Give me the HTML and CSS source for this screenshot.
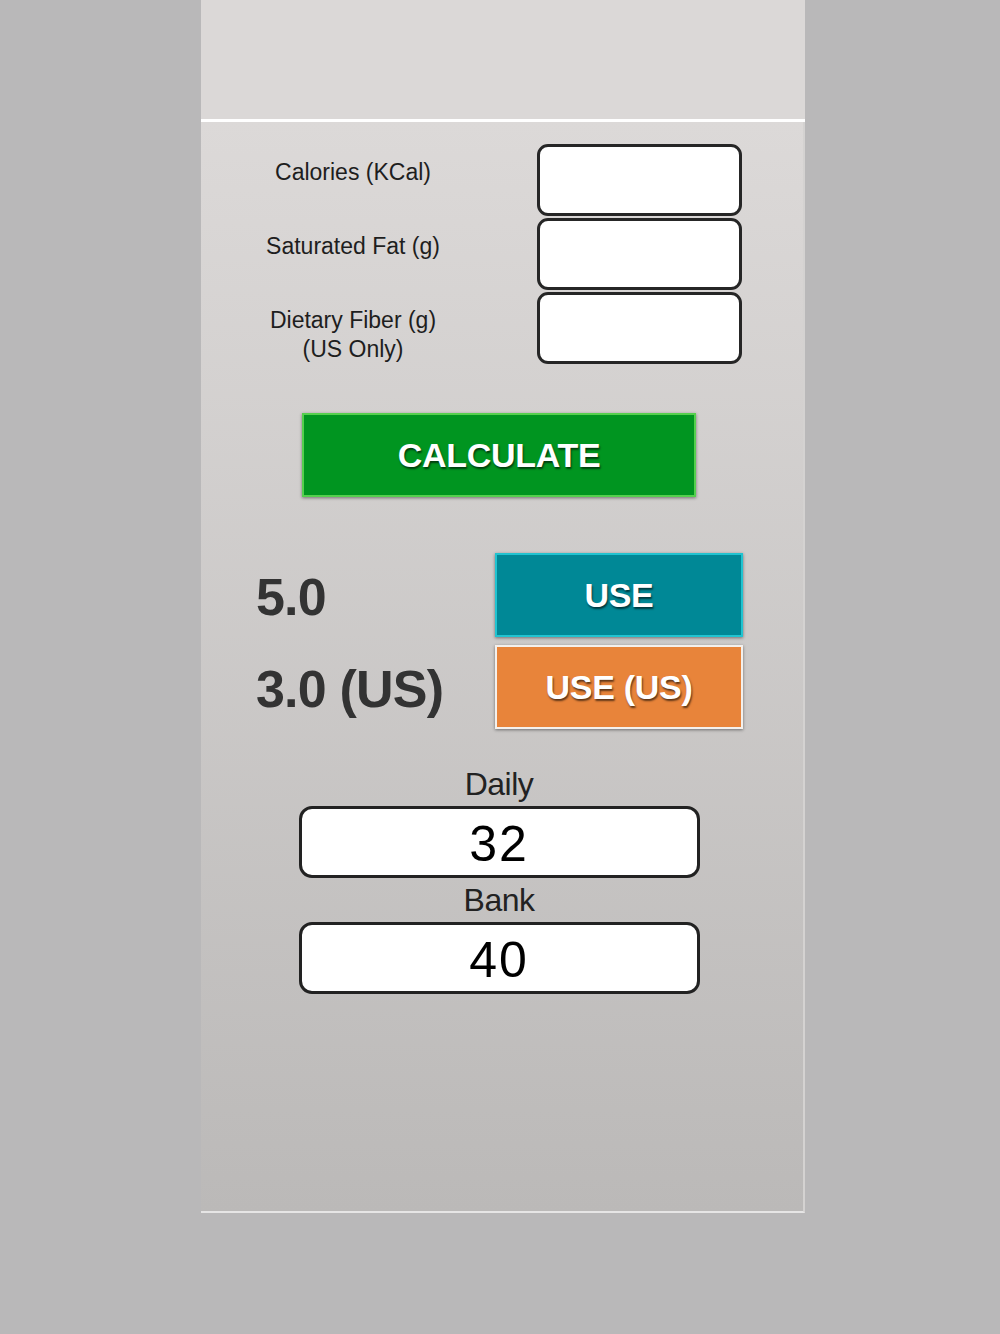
FILE: index.html
```html
<!DOCTYPE html>
<html lang="en">
<head>
    <meta charset="UTF-8">
    <meta name="viewport" content="width=device-width, initial-scale=1.0">
    <title>Points Calculator</title>
    <link rel="stylesheet" href="styles.css">
</head>
<body>
    <div class="panel">
        <div class="header"></div>
        <div class="main">
            <div class="form">
                <label class="field-label" for="calories">Calories (KCal)</label>
                <input class="field" type="number" id="calories">

                <label class="field-label" for="sat-fat">Saturated Fat (g)</label>
                <input class="field" type="number" id="sat-fat">

                <label class="field-label" for="fiber">Dietary Fiber (g)<br>(US Only)</label>
                <input class="field" type="number" id="fiber">
            </div>

            <button class="btn btn-calc">CALCULATE</button>

            <div class="results">
                <div class="value">5.0</div>
                <button class="btn btn-use">USE</button>
                <div class="value">3.0 (US)</div>
                <button class="btn btn-use-us">USE (US)</button>
            </div>

            <div class="totals">
                <div class="total-label">Daily</div>
                <div class="total-box">32</div>
                <div class="total-label">Bank</div>
                <div class="total-box">40</div>
            </div>
        </div>
    </div>
</body>
</html>
```

FILE: styles.css
```css
body {
    margin: 0;
    padding: 0;
    background-color: #b9b8b9;
    font-family: 'Liberation Sans', Arial, sans-serif;
    height: 1334px;
}
.panel {
    width: 604px;
    margin-left: 201px;
}
.header {
    height: 119px;
    background-color: #dbd8d7;
    border-bottom: 3px solid #ffffff;
}
.main {
    height: 1091px;
    background: linear-gradient(to bottom, #dcd9d8, #bbb9b8);
    border-right: 2px solid #d4d2d1;
    border-bottom: 2px solid #e6e5e5;
    padding-top: 22px;
    box-sizing: border-box;
}
.form {
    display: grid;
    grid-template-columns: 304px 205px;
    column-gap: 32px;
    row-gap: 2px;
}
.field-label {
    text-align: center;
    font-size: 23px;
    line-height: 29px;
    padding-top: 14px;
    color: #1e1e1e;
}
.field {
    height: 72px;
    box-sizing: border-box;
    border: 3px solid #262626;
    border-radius: 11px;
    background-color: #fff;
    font-size: 24px;
}
.btn {
    display: block;
    color: #fff;
    font-family: 'Liberation Sans', Arial, sans-serif;
    font-weight: 700;
    font-size: 34px;
    letter-spacing: -0.3px;
    text-shadow: 1px 2px 2px rgba(0, 0, 0, 0.6);
    box-shadow: 0 1px 3px rgba(0, 0, 0, 0.45);
    cursor: pointer;
    padding: 0;
}
.btn-calc {
    width: 394px;
    height: 84px;
    margin: 49px 0 0 101px;
    background-color: #009520;
    border: 2px solid #55d04e;
}
.results {
    display: grid;
    grid-template-columns: 239px 248px;
    row-gap: 8px;
    margin: 56px 0 0 55px;
}
.value {
    display: flex;
    align-items: center;
    padding-top: 3px;
    font-size: 52px;
    font-weight: 700;
    color: #333;
    letter-spacing: -0.8px;
}
.btn-use,
.btn-use-us {
    width: 248px;
    height: 84px;
}
.btn-use {
    background-color: #008896;
    border: 2px solid #21c3d0;
}
.btn-use-us {
    background-color: #e8843a;
    border: 2px solid #f4f0ec;
}
.totals {
    display: flex;
    flex-direction: column;
    align-items: center;
    margin: 33px 0 0 -6px;
}
.total-label {
    font-size: 32px;
    line-height: 44px;
    color: #222;
    letter-spacing: -0.5px;
}
.total-box {
    width: 401px;
    height: 72px;
    box-sizing: border-box;
    border: 3px solid #222;
    border-radius: 13px;
    background-color: #fff;
    text-align: center;
    font-size: 50px;
    line-height: 70px;
    letter-spacing: 2px;
    color: #000;
}
```
